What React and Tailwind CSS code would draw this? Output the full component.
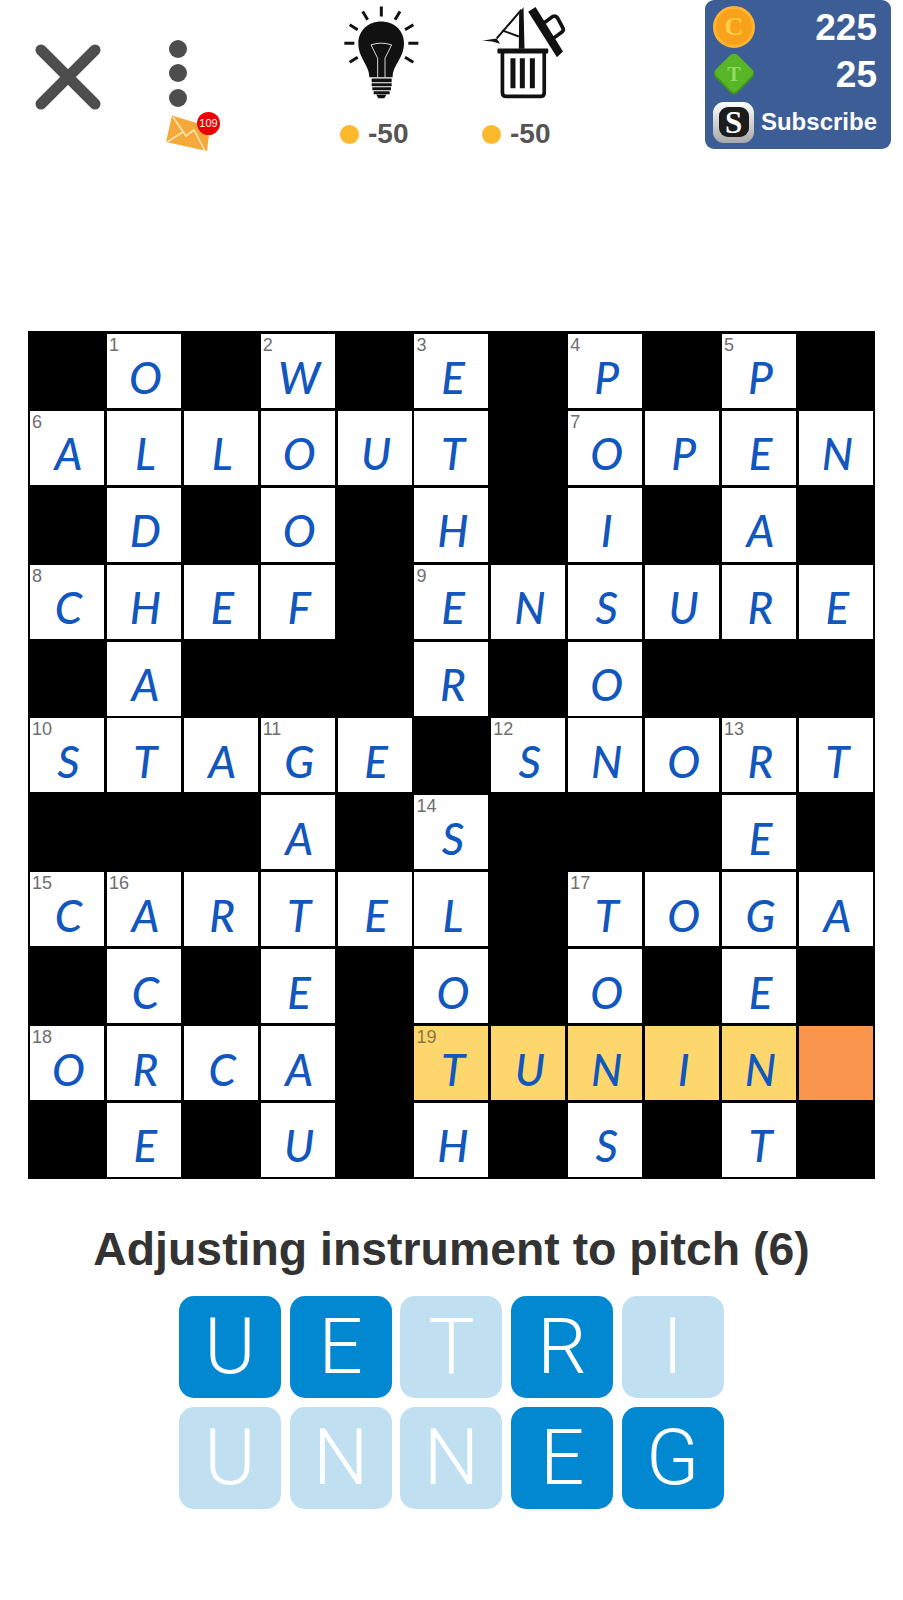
const rows = [
  '#O#W#E#P#P#',
  'ALLOUT#OPEN',
  '#D#O#H#I#A#',
  'CHEF#ENSURE',
  '#A###R#O###',
  'STAGE#SNORT',
  '###A#S###E#',
  'CARTEL#TOGA',
  '#C#E#O#O#E#',
  'ORCA#TUNIN_',
  '#E#U#H#S#T#',
];

const numbers = {
  '0-1': 1, '0-3': 2, '0-5': 3, '0-7': 4, '0-9': 5,
  '1-0': 6, '1-7': 7,
  '3-0': 8, '3-5': 9,
  '5-0': 10, '5-3': 11, '5-6': 12, '5-9': 13,
  '6-5': 14,
  '7-0': 15, '7-1': 16, '7-7': 17,
  '9-0': 18, '9-5': 19,
};

const tiles = [
  [{ l: 'U', on: true }, { l: 'E', on: true }, { l: 'T' }, { l: 'R', on: true }, { l: 'I' }],
  [{ l: 'U' }, { l: 'N' }, { l: 'N' }, { l: 'E', on: true }, { l: 'G', on: true }],
];

function Cell({ letter, number, row, col }) {
  if (letter === '#') return <div className="bg-black" />;

  const active = row === 9 && col >= 5;
  let bg = 'bg-white';
  if (active) bg = letter === '_' ? 'bg-[#f9954d]' : 'bg-[#fdd76e]';

  return (
    <div className={`relative flex items-center justify-center pt-[11px] pl-[3px] ${bg}`}>
      {number && (
        <span className={`absolute left-[2px] top-[2px] text-[18px] leading-[19px] ${active ? 'text-[#8a7748]' : 'text-[#6e6e6e]'}`}>
          {number}
        </span>
      )}
      {letter !== '_' && (
        <span className="font-['Lato'] italic text-[44px] leading-none font-medium text-[#1157bd]">{letter}</span>
      )}
    </div>
  );
}

function CloseIcon() {
  return (
    <svg width="66" height="66" viewBox="0 0 66 66" className="ml-[35px] mt-[44px]">
      <path d="M6 6 L60 60 M60 6 L6 60" stroke="#4d4d4d" strokeWidth="11" strokeLinecap="round" />
    </svg>
  );
}

function MenuColumn() {
  return (
    <div className="relative ml-[65px] w-[55px] h-[152px] pt-[40px]">
      <div className="flex flex-col gap-[6.4px] ml-[3px]">
        <div className="w-[18px] h-[18px] rounded-full bg-[#4d4d4d]" />
        <div className="w-[18px] h-[18px] rounded-full bg-[#4d4d4d]" />
        <div className="w-[18px] h-[18px] rounded-full bg-[#4d4d4d]" />
      </div>
      <svg width="46" height="40" viewBox="166 114 46 40" className="mt-[7px]">
        <polygon points="172,115.5 210,127 207,151 166,142" fill="#f4a93a" />
        <path d="M173 117 L186 136 L194 130 L205 151 M167 142 L183 132" stroke="#fbe6ae" strokeWidth="1.6" fill="none" />
      </svg>
      <div className="absolute left-[31px] top-[112px] w-[23px] h-[23px] rounded-full bg-[#ec0000] flex items-center justify-center text-white text-[11px]">
        109
      </div>
    </div>
  );
}

function BulbIcon() {
  return (
    <svg width="80" height="97" viewBox="120 10 240 290" className="mt-[3px]">
      <path
        d="M241 20V50M185 35L200 60M297 35L282 60M146 75L170 90M337 75L312 90M130 130H160M352 130H322M146 187L170 172M337 187L312 172"
        stroke="#111"
        strokeWidth="9"
      />
      <path d="M205 232C205 195 172 175 172 130C172 90 205 65 240 65C277 65 309 90 309 130C309 175 275 195 275 232Z" fill="#111" />
      <path d="M210 135Q240 125 272 135L252 175V232M230 232V175L210 135" stroke="#fff" strokeWidth="2.5" fill="none" />
      <path d="M212 236H272V247H212ZM212 250H272V259H212ZM214 262H270V271H214ZM218 274H266V283H218ZM226 285H256L250 295H232Z" fill="#111" />
    </svg>
  );
}

function BinIcon() {
  return (
    <svg width="87" height="97" viewBox="540 10 260 290" className="mt-[3px]">
      <rect x="592" y="146" width="152" height="15" rx="3" fill="#111" />
      <path d="M607 158V278Q607 289 619 289H720Q732 289 732 278V158" stroke="#111" strokeWidth="11" fill="none" />
      <path d="M631 175H646V265H631ZM659 175H674V265H659ZM689 175H704V265H689Z" fill="#111" />
      <polygon points="684,36 706,22 788,155 770,172" fill="#111" />
      <path d="M733 68L758 50Q767 47 772 55L788 85Q791 92 785 97L760 115" stroke="#111" strokeWidth="11" fill="none" />
      <polygon points="657,42 670,22 673,147 656,147" fill="#111" />
      <path d="M664 30L590 116M606 92L656 110" stroke="#111" strokeWidth="6" fill="none" />
      <path d="M546 123Q570 118 590 116L600 132Q575 122 546 123Z" fill="#111" />
    </svg>
  );
}

function Cost() {
  return (
    <div className="flex items-center mt-[17px]">
      <div className="w-[19px] h-[19px] rounded-full bg-[#fdb92c]" />
      <span className="ml-[9px] text-[28px] leading-[34px] font-bold text-[#555]">-50</span>
    </div>
  );
}

function Wallet() {
  return (
    <div className="ml-auto mr-[12px] w-[186px] h-[149px] rounded-[9px] bg-[#3c5d96] text-white font-bold pl-[8px] pr-[14px] pt-[6px]">
      <div className="flex items-center justify-between h-[42px]">
        <div className="w-[42px] h-[42px] rounded-full bg-[#f9a11b] border-[3px] border-[#ffb52e] flex items-center justify-center font-['Liberation_Serif'] text-[#ffd044] text-[26px] leading-none">
          C
        </div>
        <span className="text-[37px] leading-none">225</span>
      </div>
      <div className="flex items-center justify-between h-[42px] mt-[5px]">
        <div className="relative w-[42px] h-[42px] flex items-center justify-center">
          <div className="absolute w-[32px] h-[32px] rotate-45 rounded-[6px] bg-[#58b526] border-b-[2px] border-r-[2px] border-[#3f941a]" />
          <span className="relative font-['Liberation_Serif'] text-[#90dc60] text-[20px] leading-none">T</span>
        </div>
        <span className="text-[37px] leading-none">25</span>
      </div>
      <div className="flex items-center justify-between h-[42px] mt-[6px]">
        <div className="w-[41px] h-[41px] rounded-[11px] bg-gradient-to-b from-white to-[#a8a8a8] flex items-center justify-center">
          <div className="w-[30px] h-[30px] rounded-[9px] bg-[#1c1c1c] flex items-center justify-center text-white text-[31px] leading-none font-['Liberation_Serif']">
            S
          </div>
        </div>
        <span className="text-[24px] leading-none">Subscribe</span>
      </div>
    </div>
  );
}

export default function App() {
  return (
    <div className="min-h-[1600px] bg-white font-['Liberation_Sans',sans-serif]">
      <header className="flex items-start h-[149px]">
        <CloseIcon />
        <MenuColumn />
        <div className="ml-[120px] w-[80px] flex flex-col">
          <BulbIcon />
          <div className="ml-[-1px]"><Cost /></div>
        </div>
        <div className="ml-[59px] w-[87px] flex flex-col">
          <BinIcon />
          <div className="ml-[2px]"><Cost /></div>
        </div>
        <Wallet />
      </header>

      <main className="grid grid-cols-[repeat(11,74px)] grid-rows-[repeat(11,74px)] gap-[2.9px] w-[847px] ml-[28px] mt-[182px] pt-[3px] pb-[2px] px-[2px] bg-black">
        {rows.map((line, r) =>
          line.split('').map((letter, c) => (
            <Cell key={`${r}-${c}`} letter={letter} row={r} col={c} number={numbers[`${r}-${c}`]} />
          ))
        )}
      </main>

      <h2 className="mt-[42px] text-center text-[46.4px] leading-[56px] font-bold text-[#333]">
        Adjusting instrument to pitch (6)
      </h2>

      <section className="mt-[19px] flex flex-col gap-[9px] w-max ml-[179px]">
        {tiles.map((line, i) => (
          <div key={i} className="flex gap-[8.7px]">
            {line.map((tile, j) => (
              <div
                key={j}
                className={`w-[102px] h-[102px] rounded-[15px] flex items-center justify-center font-['Roboto'] font-[350] text-white text-[78px] leading-none ${tile.on ? 'bg-[#0288d1]' : 'bg-[#c0e0f2]'}`}
              >
                {tile.l}
              </div>
            ))}
          </div>
        ))}
      </section>
    </div>
  );
}
